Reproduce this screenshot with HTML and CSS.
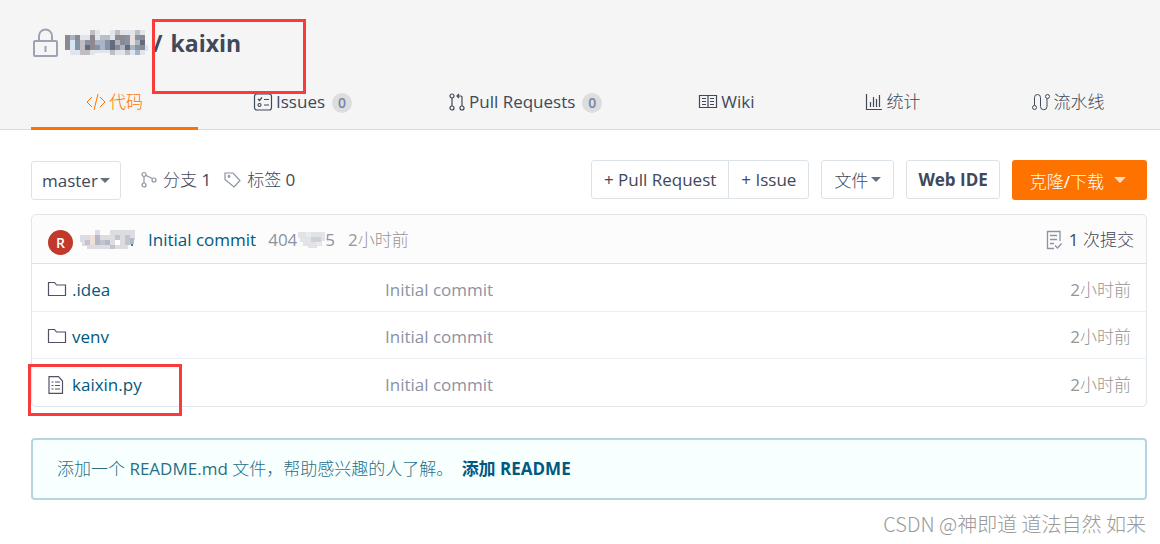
FILE: index.html
```html
<!DOCTYPE html>
<html lang="zh-CN">
<head>
    <meta charset="UTF-8">
    <meta name="viewport" content="width=device-width, initial-scale=1.0">
    <title>kaixin</title>
    <link rel="stylesheet" href="styles.css">
</head>
<body>
    <header class="header">
        <h1 class="repo-title">
            <svg class="lock" width="26" height="30" viewBox="0 0 26 30" fill="none" stroke="#9da3b3" stroke-width="2"><rect x="1" y="13" width="23" height="15" rx="1"/><path d="M6 13V8a6.500 6.500 0 0 1 13 0v5M12.500 18v6"/></svg>
            <svg class="mosaic" width="84" height="26" viewBox="0 0 84 26" shape-rendering="crispEdges">
                <path fill="#dfe5eb" d="M0 5h80v15H0zM25 0h10v5H25zM45 0h35v5H45zM5 20h75v5H45v-2H30v2H5z"/>
                <path fill="#c0bdc3" d="M25 0h5v5h-5zM50 0h5v5h-5zM70 0h5v5h-5zM40 5h5v5h-5zM15 20h10v5H15zM45 20h5v5h-5zM60 20h5v5h-5zM15 10h5v10h-5zM35 5h5v5h-5z"/>
                <path fill="#8d898f" d="M0 5h5v15H0zM10 5h5v5h-5zM25 5h5v15h-5zM50 5h5v5h-5zM50 15h5v5h-5zM55 5h5v10h-5zM75 5h5v5h-5zM75 15h5v5h-5z"/>
                <path fill="#8592aa" d="M10 10h5v10h-5zM20 10h5v5h-5zM30 15h5v5h-5zM40 10h5v10h-5zM60 5h5v10h-5zM70 5h5v5h-5zM70 15h5v5h-5z"/>
                <path fill="#646b7f" d="M20 15h5v5h-5zM45 10h5v10h-5zM60 15h5v5h-5zM75 10h5v5h-5z"/>
                <path fill="#a9b5c7" d="M5 5h5v5H5zM30 10h5v5h-5zM35 15h5v5h-5zM35 10h5v5h-5zM50 10h5v5h-5zM55 15h5v5h-5zM65 15h5v5h-5zM70 10h5v5h-5zM70 20h5v5h-5z"/>
                <path fill="#e9e1d8" d="M65 5h5v10h-5z"/>
                <path fill="#d4e8f1" d="M5 10h5v10H5zM80 15h3v6h-3z"/>
            </svg>
            <span>/ <a href="#">kaixin</a></span>
            <span class="mark mark-title"></span>
        </h1>
        <nav class="tabs">
            <a class="tab active" href="#"><svg width="20" height="18" viewBox="0 0 20 18" fill="none" stroke="currentColor"><path d="M6 4L1 9l5 5M14 4l5 5-5 5M12 1L8 17"/></svg>代码</a>
            <a class="tab" href="#"><svg width="20" height="18" viewBox="0 0 20 18" fill="none" stroke="currentColor" stroke-width="1.200"><rect x="1.500" y="1" width="17" height="16" rx="2.500"/><path d="M5 6l1.500 1.500L9 4.500M11 6.500h5M11 12h5"/><circle cx="6.500" cy="12" r="1.500"/></svg>Issues<span class="badge">0</span></a>
            <a class="tab" href="#"><svg width="18" height="18" viewBox="0 0 18 18" fill="none" stroke="currentColor" stroke-width="1.200"><circle cx="4" cy="3" r="2"/><circle cx="4" cy="15" r="2"/><circle cx="14" cy="15" r="2"/><path d="M4 5v8M14 13V4q0-1-1-1H9M11 1L9 3l2 2"/></svg>Pull Requests<span class="badge">0</span></a>
            <a class="tab" href="#"><svg width="20" height="18" viewBox="0 0 20 18" fill="none" stroke="currentColor" stroke-width="1.200"><path d="M1.500 2.500h17v12h-17zM10 2.500v12M4 5.500h4M4 8.500h4M4 11.500h4M12 5.500h4M12 8.500h4M12 11.500h4"/></svg>Wiki</a>
            <a class="tab" href="#"><svg width="19" height="18" viewBox="0 0 19 18" fill="none" stroke="currentColor" stroke-width="1.200"><path d="M1.500 1v15.500H17M5.500 9v5M8.500 4v10M11.500 6v8M14.500 2v12"/></svg>统计</a>
            <a class="tab" href="#"><svg width="20" height="18" viewBox="0 0 20 18" fill="none" stroke="currentColor"><circle cx="3.500" cy="14.500" r="2"/><circle cx="16.500" cy="3.500" r="2"/><path d="M3.500 12.500V4.500a3 3 0 0 1 6 0v9a3 3 0 0 0 6.500 0v-8"/></svg>流水线</a>
        </nav>
    </header>

    <main class="content">
        <div class="toolbar">
            <div class="branch">
                <select class="btn branch-select" aria-label="分支">
                    <option>master</option>
                </select>
                <span class="caret branch-caret"></span>
            </div>
            <a class="stat" href="#"><svg width="16" height="18" viewBox="0 0 16 18" fill="none" stroke="#8c92a4" stroke-width="1.200"><circle cx="3" cy="3.500" r="2"/><circle cx="3" cy="14" r="2"/><circle cx="13" cy="9" r="2"/><path d="M3 5.500V12M5 4.500l6.500 3"/></svg>分支 1</a>
            <a class="stat" href="#"><svg width="17" height="18" viewBox="0 0 17 18" fill="none" stroke="#8c92a4" stroke-width="1.200"><path d="M1 2h8l7 7.500-6 6.500L1 8.500z"/><circle cx="5" cy="5.500" r="0.800"/></svg>标签 0</a>
            <div class="actions">
                <div class="group">
                    <button class="btn">+ Pull Request</button>
                    <button class="btn">+ Issue</button>
                </div>
                <button class="btn">文件<span class="caret"></span></button>
                <button class="btn bold">Web IDE</button>
                <button class="btn primary">克隆/下载<span class="caret"></span></button>
            </div>
        </div>

        <table class="files">
            <thead>
                <tr>
                    <th colspan="3">
                        <div class="commit">
                            <span class="avatar">R</span>
                            <svg class="mosaic" width="56" height="20" viewBox="0 0 56 20" shape-rendering="crispEdges">
                                <path fill="#dcdde1" d="M0 5h55v5h-2v5h-5v4H7v-3H2v-4H0zM15 0h5v5h-5zM30 0h25v5H30z"/>
                                <path fill="#c3c5cb" d="M5 10h5v5H5zM20 10h5v5h-5zM25 10h5v5h-5zM35 5h5v5h-5zM45 5h5v10h-5zM30 15h5v4h-5z"/>
                                <path fill="#b4b8ca" d="M15 5h5v10h-5zM25 10h5v5h-5zM50 8h4v6h-4z"/>
                                <path fill="#efe0d8" d="M10 5h5v10h-5z"/>
                                <path fill="#fff" d="M35 10h5v5h-5z"/>
                                <path fill="#357ab7" d="M51 14h2v2h-2z"/>
                            </svg>
                            <a class="message" href="#">Initial commit</a>
                            <span class="hash">404<svg class="hash-mosaic" width="30" height="20" viewBox="0 0 30 20" shape-rendering="crispEdges"><path fill="#e3e3e7" d="M2 2h27v9h-3v5h-5v2H12v-2H7v-4H4V8H2z"/><path fill="#cfd1d6" d="M15 7h10v5H15z"/><path fill="#e3edf2" d="M10 2h5v5h-5zM20 12h5v3h-5z"/></svg>5</span>
                            <span class="time">2小时前</span>
                            <a class="count" href="#"><svg width="18" height="20" viewBox="0 0 18 20" fill="none" stroke="#8c92a4" stroke-width="1.300"><path d="M15 11V1.500H2.500v17H9M5 5.500h7M5 9.500h7M5 13.500h4M10 15.500l2.500 2.500 4-4.500"/></svg>1 次提交</a>
                        </div>
                    </th>
                </tr>
            </thead>
            <tbody>
                <tr>
                    <td class="name"><a href="#"><svg width="20" height="18" viewBox="0 0 20 18" fill="none" stroke="#554f66" stroke-width="1.200"><path d="M1.500 14.500v-13h6l2 2.500h9v10.500z"/></svg>.idea</a></td>
                    <td class="desc">Initial commit</td>
                    <td class="time">2小时前</td>
                </tr>
                <tr>
                    <td class="name"><a href="#"><svg width="20" height="18" viewBox="0 0 20 18" fill="none" stroke="#554f66" stroke-width="1.200"><path d="M1.500 14.500v-13h6l2 2.500h9v10.500z"/></svg>venv</a></td>
                    <td class="desc">Initial commit</td>
                    <td class="time">2小时前</td>
                </tr>
                <tr>
                    <td class="name"><a href="#"><svg width="20" height="18" viewBox="0 0 20 18" fill="none" stroke="#554f66" stroke-width="1.200"><path d="M2 .700h9.500L15.500 5v12.300H2zM4.500 6h2M8 6h5M4.500 9.500h2M8 9.500h5M4.500 13h2M8 13h5"/></svg>kaixin.py</a><span class="mark mark-file"></span></td>
                    <td class="desc">Initial commit</td>
                    <td class="time">2小时前</td>
                </tr>
            </tbody>
        </table>

        <div class="notice">添加一个 README.md 文件，帮助感兴趣的人了解。 <a href="#">添加 README</a></div>
        <footer class="watermark">CSDN @神即道 道法自然 如来</footer>
    </main>
</body>
</html>
```
FILE: styles.css
```css
* {
    box-sizing: border-box;
}
body {
    margin: 0;
    font-family: "Open Sans", "Noto Sans CJK SC Light", "Noto Sans CJK SC", sans-serif;
    font-size: 17px;
    line-height: 24px;
    color: #40485b;
    background: #fff;
}
a {
    color: inherit;
    text-decoration: none;
}
svg {
    flex: none;
}
.header {
    padding: 24px 13px 0 31px;
    background: #f5f5f5;
    border-bottom: 1px solid #dcdcdc;
}
.repo-title {
    position: relative;
    display: flex;
    align-items: center;
    gap: 6px;
    margin: 0 0 16px;
    font-size: 23px;
    line-height: 38px;
}
.repo-title a {
    margin-left: 2px;
}
.lock {
    margin-left: 2px;
}
.mosaic {
    margin-right: -2px;
}
.mark {
    position: absolute;
    border: 3px solid #fb3a3a;
}
.mark-title {
    left: 121px;
    top: -5px;
    width: 154px;
    height: 75px;
}
.mark-file {
    left: -4px;
    top: 5px;
    width: 154px;
    height: 52px;
}
.tabs {
    display: flex;
    margin-bottom: -1px;
}
.tab {
    display: flex;
    align-items: center;
    gap: 3px;
    height: 52px;
    padding: 0 55px 4px;
    white-space: nowrap;
}
.tab:last-child {
    padding-right: 0;
}
.tab.active {
    color: #fe7300;
    border-bottom: 3px solid #fe7300;
    padding-bottom: 1px;
}
.badge {
    width: 20px;
    height: 20px;
    margin: 2px -14px 0 4px;
    border-radius: 10px;
    background: #dcddde;
    color: #7a84a3;
    font-size: 14px;
    font-weight: 600;
    line-height: 20px;
    text-align: center;
}
.content {
    padding: 30px 13px 0 31px;
}
.toolbar {
    display: flex;
    align-items: center;
    height: 40px;
    margin-bottom: 14px;
}
.btn {
    display: flex;
    align-items: center;
    gap: 3px;
    height: 39px;
    padding: 0 12px;
    border: 1px solid #dce3e8;
    border-radius: 3px;
    background: #fff;
    color: #40485b;
    font-family: inherit;
    font-size: 17px;
    white-space: nowrap;
}
.bold {
    padding: 0 11px;
    font-weight: bold;
}
.caret {
    border: 5px solid transparent;
    border-top-color: #696d80;
    border-bottom: 0;
}
.branch {
    position: relative;
    margin-right: 20px;
}
.branch-select {
    appearance: none;
    width: 90px;
    padding: 0 10px;
}
.branch-caret {
    position: absolute;
    right: 11px;
    top: 17px;
    pointer-events: none;
}
.stat {
    display: flex;
    align-items: center;
    gap: 6px;
    margin-right: 13px;
}
.actions {
    display: flex;
    gap: 12px;
    margin-left: auto;
}
.group {
    display: flex;
}
.group .btn:first-child {
    border-radius: 3px 0 0 3px;
}
.group .btn:last-child {
    margin-left: -1px;
    border-radius: 0 3px 3px 0;
}
.primary {
    gap: 10px;
    height: 40px;
    padding: 0 21px 0 18px;
    border: 0;
    background: #fe7300;
    color: #fff;
}
.primary .caret {
    border-width: 6px 6px 0;
    border-top-color: #ffdcc0;
}
.files {
    width: 100%;
    border: 1px solid #dfe5ea;
    border-radius: 5px;
    border-spacing: 0;
}
.files th {
    height: 49px;
    padding: 2px 12px 0 16px;
    border-bottom: 1px solid #dce3e8;
    border-radius: 5px 5px 0 0;
    background: #fcfcfc;
    font-weight: normal;
}
.commit {
    display: flex;
    align-items: center;
}
.avatar {
    width: 25px;
    height: 25px;
    margin: 4px 7px 0 0;
    border-radius: 50%;
    background: #c0392b;
    color: #fff;
    font-size: 14px;
    font-weight: 600;
    line-height: 25px;
    text-align: center;
}
.message {
    margin: 0 12px 0 14px;
    color: #005980;
}
.hash {
    display: flex;
    align-items: center;
    margin-right: 13px;
    color: #8c92a4;
}
.hash-mosaic {
    margin: 0 -1px;
}
.time {
    color: #969696;
}
.count {
    display: flex;
    align-items: center;
    gap: 6px;
    margin-left: auto;
}
.files td {
    height: 48px;
    padding: 4px 15px 0;
    border-bottom: 1px solid #ebf0f4;
}
.files tbody tr:nth-child(n+2) td {
    height: 47px;
}
.files tbody tr:last-child td {
    border-bottom: 0;
}
.files .name {
    position: relative;
    width: 338px;
    color: #005980;
}
.name a {
    display: flex;
    align-items: center;
    gap: 5px;
}
.files .desc {
    color: #8c92a4;
}
.files .time {
    text-align: right;
}
.notice {
    margin-top: 31px;
    padding: 17px 24px;
    border: 2px solid #b5d6de;
    border-radius: 4px;
    background: #f8ffff;
    color: #276f86;
}
.notice a {
    margin-left: 4px;
    color: #005980;
    font-family: "Open Sans", "Noto Sans CJK SC", sans-serif;
    font-weight: bold;
}
.watermark {
    margin: 11px 1px 0 0;
    color: #999;
    font-family: "Noto Sans CJK SC", sans-serif;
    font-size: 20px;
    font-weight: 300;
    line-height: 26px;
    text-align: right;
}
```
